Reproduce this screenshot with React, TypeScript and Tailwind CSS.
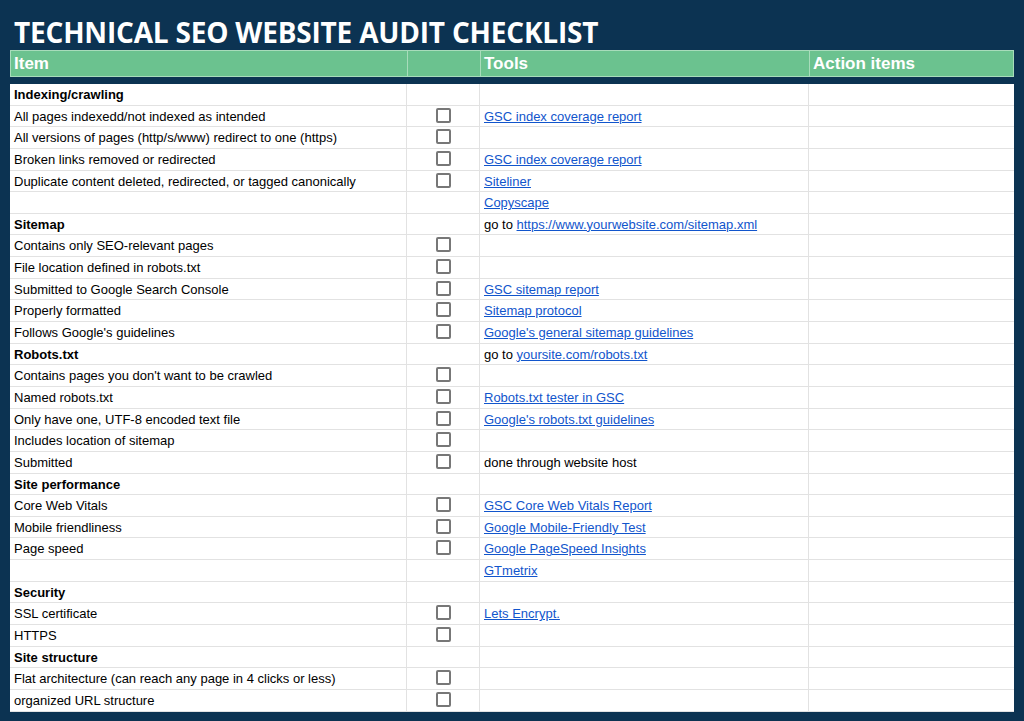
type Row = { item: string; bold?: boolean; check?: boolean; tool?: string; pre?: string };

const rows: Row[] = [
  { item: 'Indexing/crawling', bold: true },
  { item: 'All pages indexedd/not indexed as intended', check: true, tool: 'GSC index coverage report' },
  { item: 'All versions of pages (http/s/www) redirect to one (https)', check: true },
  { item: 'Broken links removed or redirected', check: true, tool: 'GSC index coverage report' },
  { item: 'Duplicate content deleted, redirected, or tagged canonically', check: true, tool: 'Siteliner' },
  { item: '', tool: 'Copyscape' },
  { item: 'Sitemap', bold: true, pre: 'go to ', tool: 'https://www.yourwebsite.com/sitemap.xml' },
  { item: 'Contains only SEO-relevant pages', check: true },
  { item: 'File location defined in robots.txt', check: true },
  { item: 'Submitted to Google Search Console', check: true, tool: 'GSC sitemap report' },
  { item: 'Properly formatted', check: true, tool: 'Sitemap protocol' },
  { item: "Follows Google's guidelines", check: true, tool: "Google's general sitemap guidelines" },
  { item: 'Robots.txt', bold: true, pre: 'go to ', tool: 'yoursite.com/robots.txt' },
  { item: "Contains pages you don't want to be crawled", check: true },
  { item: 'Named robots.txt', check: true, tool: 'Robots.txt tester in GSC' },
  { item: 'Only have one, UTF-8 encoded text file', check: true, tool: "Google's robots.txt guidelines" },
  { item: 'Includes location of sitemap', check: true },
  { item: 'Submitted', check: true, pre: 'done through website host' },
  { item: 'Site performance', bold: true },
  { item: 'Core Web Vitals', check: true, tool: 'GSC Core Web Vitals Report' },
  { item: 'Mobile friendliness', check: true, tool: 'Google Mobile-Friendly Test' },
  { item: 'Page speed', check: true, tool: 'Google PageSpeed Insights' },
  { item: '', tool: 'GTmetrix' },
  { item: 'Security', bold: true },
  { item: 'SSL certificate', check: true, tool: 'Lets Encrypt.' },
  { item: 'HTTPS', check: true },
  { item: 'Site structure', bold: true },
  { item: 'Flat architecture (can reach any page in 4 clicks or less)', check: true },
  { item: 'organized URL structure', check: true },
];

const cols = 'grid grid-cols-[397px_73px_329px_201px]';

export default function App() {
  return (
    <div className="w-[1024px] h-[721px] overflow-hidden bg-[#0c3352] px-[10px] pt-[14px]" style={{ fontFamily: '"Liberation Sans", Arial, sans-serif' }}>
      <h1 className="text-white font-bold text-[28px] leading-[36px] pl-[4px] tracking-[-0.2px]" style={{ fontFamily: '"Open Sans", sans-serif' }}>
        TECHNICAL SEO WEBSITE AUDIT CHECKLIST
      </h1>
      <div className={`${cols} bg-[#6bc28f] border border-[#a8dcbb] h-[27px] text-white font-bold text-[17px]`}>
        <div className="px-[3px] leading-[25px] border-r border-[#a8dcbb]">Item</div>
        <div className="border-r border-[#a8dcbb]" />
        <div className="px-[3px] leading-[25px] border-r border-[#a8dcbb]">Tools</div>
        <div className="px-[3px] leading-[25px]">Action items</div>
      </div>
      <div className="mt-[7px] bg-white text-[13px] text-black">
        {rows.map((r, i) => (
          <div key={i} className={`${cols} h-[21.65px] border-b border-[#e2e2e2]`}>
            <div className={`px-[4px] leading-[21px] border-r border-[#e2e2e2] whitespace-nowrap ${r.bold ? 'font-bold' : ''}`}>{r.item}</div>
            <div className="border-r border-[#e2e2e2] flex justify-center pt-[2px]">
              {r.check && <div className="w-[15px] h-[15px] border-2 border-[#777] rounded-[2px]" />}
            </div>
            <div className="px-[4px] leading-[21px] border-r border-[#e2e2e2] whitespace-nowrap">
              {r.pre}
              {r.tool && <span className="text-[#1155cc] underline">{r.tool}</span>}
            </div>
            <div />
          </div>
        ))}
      </div>
    </div>
  );
}
